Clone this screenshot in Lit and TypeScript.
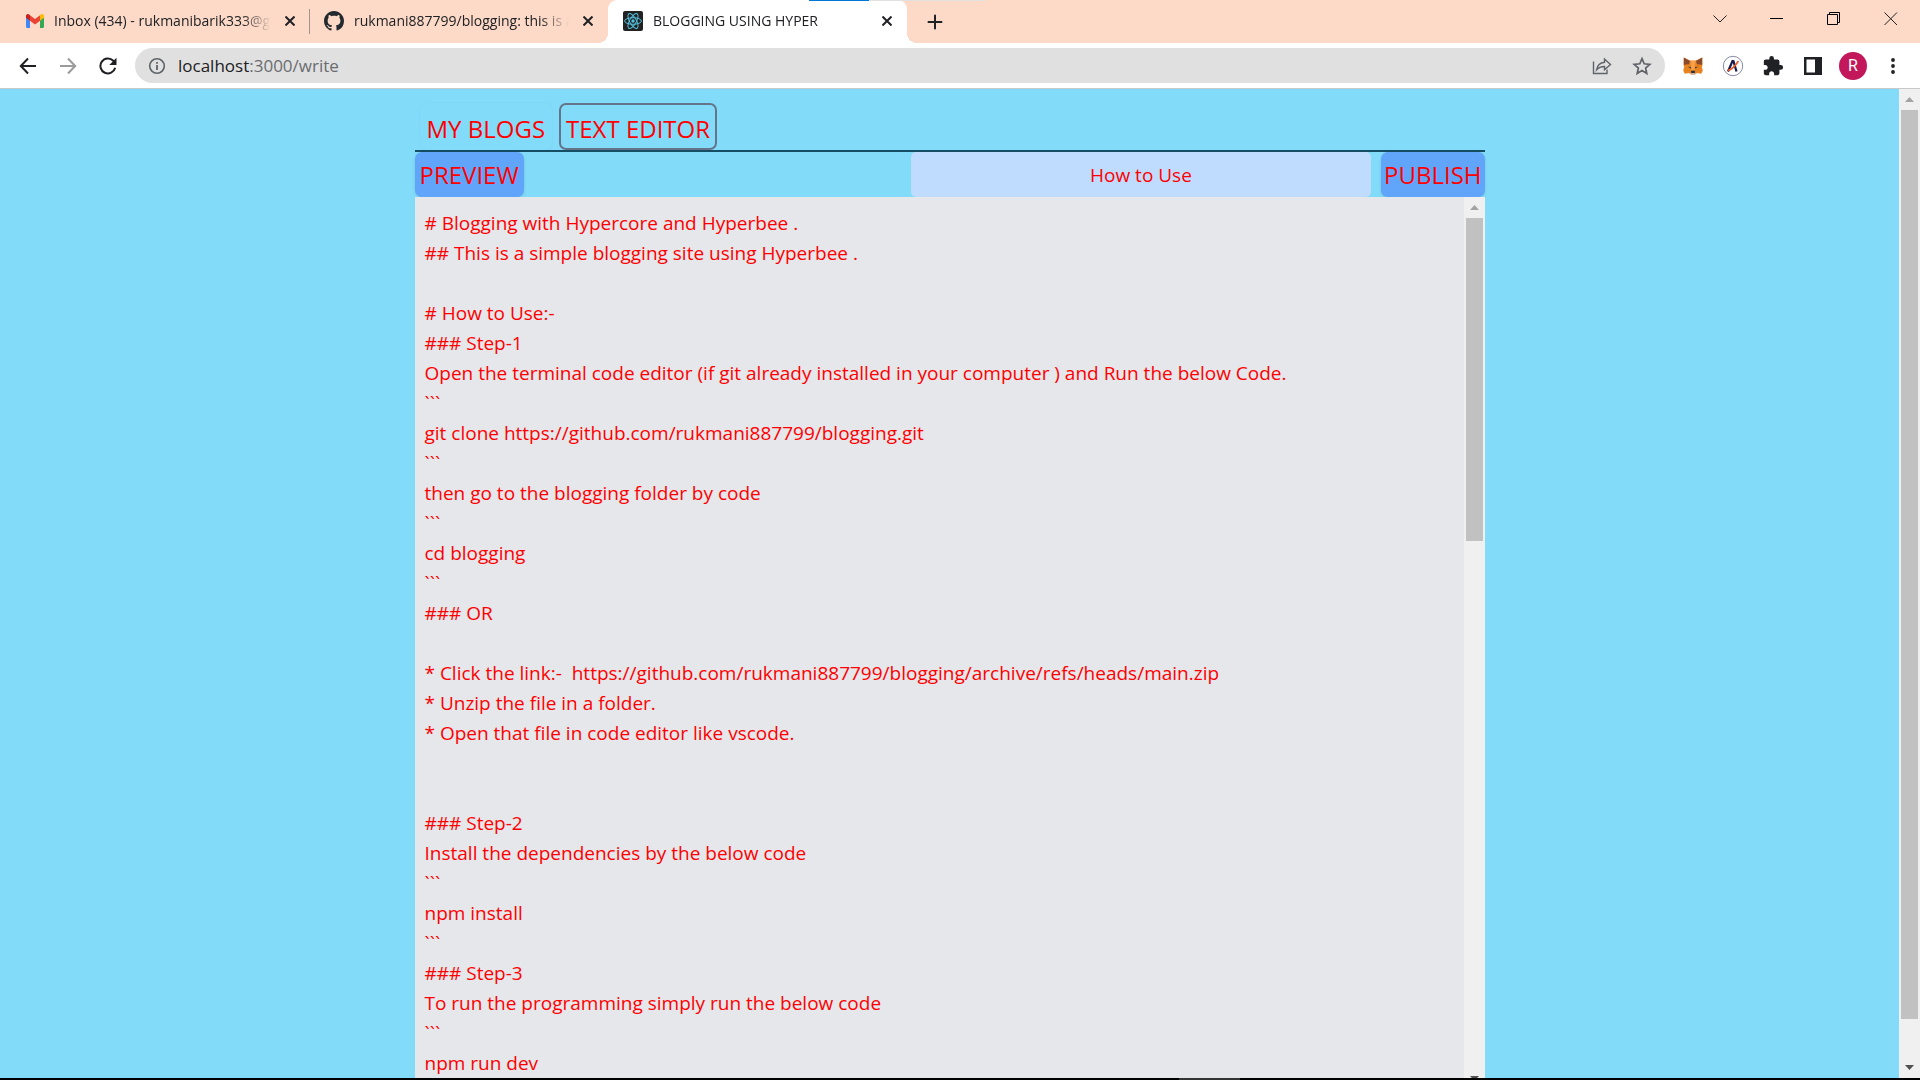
import { LitElement, html, css, svg } from "lit";
import { customElement, property, state } from "lit/decorators.js";

const DRAFT = `# Blogging with Hypercore and Hyperbee .
## This is a simple blogging site using Hyperbee .

# How to Use:-
### Step-1
Open the terminal code editor (if git already installed in your computer ) and Run the below Code.
\`\`\`
git clone https://github.com/rukmani887799/blogging.git
\`\`\`
then go to the blogging folder by code
\`\`\`
cd blogging
\`\`\`
### OR

* Click the link:-  https://github.com/rukmani887799/blogging/archive/refs/heads/main.zip
* Unzip the file in a folder.
* Open that file in code editor like vscode.


### Step-2
Install the dependencies by the below code
\`\`\`
npm install
\`\`\`
### Step-3
To run the programming simply run the below code
\`\`\`
npm run dev`;

const reset = css`
  :host,
  * {
    box-sizing: border-box;
  }
  button,
  input,
  textarea {
    font: inherit;
    color: inherit;
    background: none;
    border: 0;
    margin: 0;
    padding: 0;
    outline: 0;
  }
  a {
    color: inherit;
    text-decoration: none;
  }
  svg {
    display: block;
  }
`;

const gmailIcon = svg`<svg width="18" height="14" viewBox="0 0 18 14">
  <path fill="#4285f4" d="M0 2.2V12.8C0 13.5.5 14 1.2 14H4V5.6L0 2.6Z"/>
  <path fill="#34a853" d="M14 14h2.8c.7 0 1.2-.5 1.2-1.2V2.6l-4 3Z"/>
  <path fill="#fbbc04" d="M14 1.5v5.3l4-3V2C18 .3 16.2-.6 14.8.4L14 1Z"/>
  <path fill="#ea4335" d="M4 6.8V1.2l5 3.8 5-3.8v5.6L9 10.6Z"/>
  <path fill="#c5221f" d="M0 2v1.8l4 3V1.2L3.2.4C1.8-.6 0 .3 0 2Z"/>
</svg>`;

const githubIcon = svg`<svg width="20" height="20" viewBox="0 0 16 16" fill="#24292f">
  <path d="M8 0C3.58 0 0 3.58 0 8c0 3.54 2.29 6.53 5.47 7.59.4.07.55-.17.55-.38 0-.19-.01-.82-.01-1.49-2.01.37-2.53-.49-2.69-.94-.09-.23-.48-.94-.82-1.13-.28-.15-.68-.52-.01-.53.63-.01 1.08.58 1.23.82.72 1.21 1.87.87 2.33.66.07-.52.28-.87.51-1.07-1.78-.2-3.64-.89-3.64-3.95 0-.87.31-1.59.82-2.15-.08-.2-.36-1.02.08-2.12 0 0 .67-.21 2.2.82.64-.18 1.32-.27 2-.27s1.36.09 2 .27c1.53-1.04 2.2-.82 2.2-.82.44 1.1.16 1.92.08 2.12.51.56.82 1.27.82 2.15 0 3.07-1.87 3.75-3.65 3.95.29.25.54.73.54 1.48 0 1.07-.01 1.93-.01 2.2 0 .21.15.46.55.38A8.01 8.01 0 0 0 16 8c0-4.42-3.58-8-8-8Z"/>
</svg>`;

const reactIcon = svg`<svg width="20" height="20" viewBox="0 0 20 20">
  <rect width="20" height="20" rx="2" fill="#222"/>
  <g fill="none" stroke="#53c1de" stroke-width="1">
    <ellipse cx="10" cy="10" rx="8.4" ry="3.3"/>
    <ellipse cx="10" cy="10" rx="8.4" ry="3.3" transform="rotate(60 10 10)"/>
    <ellipse cx="10" cy="10" rx="8.4" ry="3.3" transform="rotate(120 10 10)"/>
  </g>
  <circle cx="10" cy="10" r="1.7" fill="#53c1de"/>
</svg>`;

const closeIcon = svg`<svg width="10" height="10" viewBox="0 0 10 10" stroke="#202124" stroke-width="2">
  <path d="M.5.5 9.5 9.5M9.5.5.5 9.5"/>
</svg>`;
const plusIcon = svg`<svg width="16" height="16" viewBox="0 0 16 16" stroke="#202124" stroke-width="2" stroke-linecap="round">
  <path d="M8 1.5v13M1.500 8h13"/>
</svg>`;

const chevronIcon = svg`<svg width="14" height="14" viewBox="0 0 14 14" fill="none" stroke="#222"><path d="M.5 3.5 7 10l6.500-6.500"/></svg>`;
const minimiseIcon = svg`<svg width="14" height="14" viewBox="0 0 14 14" fill="none" stroke="#000"><path d="M0 6.5h13"/></svg>`;
const restoreIcon = svg`<svg width="14" height="14" viewBox="0 0 14 14" fill="none" stroke="#000"><path d="M.5 2.5h10v10H.5ZM2.5 2.5v-2h10v10h-2"/></svg>`;
const quitIcon = svg`<svg width="14" height="14" viewBox="0 0 14 14" fill="none" stroke="#222"><path d="M.5.5l12.5 12.5M13 .5.5 13"/></svg>`;

const backIcon = svg`<svg width="18" height="18" viewBox="0 0 18 18" fill="none" stroke="#202124" stroke-width="2"><path d="M17 9H2M9 1.5 1.8 9 9 16.5"/></svg>`;
const forwardIcon = svg`<svg width="18" height="18" viewBox="0 0 18 18" fill="none" stroke="#9a9b9d" stroke-width="2"><path d="M1 9h15M9 1.5 16.2 9 9 16.5"/></svg>`;
const reloadIcon = svg`<svg width="18" height="18" viewBox="0 0 18 18"><path fill="none" stroke="#202124" stroke-width="2" d="M16.2 10.8A7.5 7.5 0 1 1 14.3 3.7L15.5 5"/><path fill="#202124" d="M17.5.8V8h-7.2Z"/></svg>`;
const infoIcon = svg`<svg width="18" height="18" viewBox="0 0 18 18"><circle cx="9" cy="9" r="7.3" fill="none" stroke="#5f6368" stroke-width="1.6"/><path fill="#5f6368" d="M8.1 8h1.8v5H8.1ZM8.1 5h1.8v1.8H8.1Z"/></svg>`;
const shareIcon = svg`<svg width="20" height="20" viewBox="0 0 20 20" fill="none" stroke="#5f6368" stroke-width="1.4"><path d="M1.5 5.5v12h13.500v-4"/><path d="M12.5 3v3.3C8 6.8 5.3 9.500 4.600 13.800c2-2.400 4.400-3.300 7.900-3.300v3.300L18.500 8.400Z"/></svg>`;
const starIcon = svg`<svg width="20" height="20" viewBox="0 0 20 20" fill="none" stroke="#5f6368" stroke-width="1.7"><path d="M10 2.6l2.2 5.2 5.6.5-4.2 3.7 1.2 5.5L10 14.6l-4.8 2.9L6.4 12 2.2 8.3l5.6-.5Z"/></svg>`;
const foxIcon = svg`<svg width="20" height="20" viewBox="0 0 20 20">
  <path fill="#e8821e" d="M.8 1.5 7 4.5h6l6.2-3 .4 7-.8 2.5 1 3.5-1.6 3.2-4.2-.7L12 18.5H8l-2-1.5-4.2.7L.2 14.5l1-3.5-.8-2.5Z"/>
  <path fill="#8a4a2c" d="M.8 1.5 7 5 6 8.2l-5 .6ZM19.2 1.5 13 5l1 3.2 5 .6Z"/>
  <path fill="#f6a04a" d="M7.5 5h5l-1 9h-3Z"/>
  <path fill="#233447" d="M4.8 10.8l3 .3.2 1.4ZM15.2 10.8l-3 .3-.2 1.4ZM8 15.5l.6-.8h2.8l.6.8-.3 1.8H8.3Z"/>
  <path fill="#d5bfb2" d="M7 17.2h6L12 19H8Z"/>
</svg>`;
const argentIcon = svg`<svg width="22" height="22" viewBox="0 0 22 22" fill="none"><circle cx="11" cy="11" r="9.7" fill="#fff" stroke="#8a8aa5" stroke-width="1"/><path stroke="#1b1b4b" stroke-width="2.2" d="M6 16.5 10.500 6l1 .2L14.500 16.500"/><path stroke="#ee5a2a" stroke-width="1.6" d="M5.500 15.500c4-.5 7-3.500 11-9.500"/></svg>`;
const puzzleIcon = svg`<svg width="22" height="22" viewBox="0 0 24 24" fill="#202124"><path d="M20.5 11H19V7c0-1.1-.9-2-2-2h-4V3.5a2.5 2.5 0 0 0-5 0V5H4c-1.1 0-1.99.9-1.99 2v3.8H3.5c1.49 0 2.7 1.21 2.7 2.7s-1.21 2.7-2.7 2.7H2V20c0 1.1.9 2 2 2h3.8v-1.5c0-1.49 1.21-2.7 2.7-2.7 1.49 0 2.7 1.21 2.7 2.7V22H17c1.1 0 2-.9 2-2v-4h1.5a2.5 2.5 0 0 0 0-5Z"/></svg>`;
const panelIcon = svg`<svg width="18" height="18" viewBox="0 0 18 18"><path fill="#202124" fill-rule="evenodd" d="M0 0h18v18H0ZM2.5 2.5v13h8.500v-13Z"/></svg>`;
const dotsIcon = svg`<svg width="18" height="18" viewBox="0 0 18 18" fill="#202124"><circle cx="9" cy="3" r="1.9"/><circle cx="9" cy="9" r="1.9"/><circle cx="9" cy="15" r="1.9"/></svg>`;

/** Tab strip along the top of the browser window. */
@customElement("tab-strip")
export class TabStrip extends LitElement {
  static styles = [
    reset,
    css`
      :host {
        display: flex;
        height: 43px;
        background: #fddac8;
        font-size: 14px;
        color: #202124;
        position: relative;
      }
      .tab {
        display: flex;
        align-items: center;
        width: 299px;
        height: 43px;
        padding: 0 12px 2px 15px;
      }
      .mail {
        width: 310px;
        padding-left: 26px;
      }
      .repo {
        width: 298px;
        padding-left: 14px;
      }
      .active {
        background: #fff;
        border-radius: 9px 9px 0 0;
        position: relative;
      }
      .active::before,
      .active::after {
        content: "";
        position: absolute;
        bottom: 0;
        width: 10px;
        height: 10px;
      }
      .active::before {
        left: -10px;
        background: radial-gradient(circle at 0 0, transparent 10px, #fff 10px);
      }
      .active::after {
        right: -10px;
        background: radial-gradient(circle at 100% 0, transparent 10px, #fff 10px);
      }
      .name {
        flex: 1;
        min-width: 0;
        display: flex;
        align-items: center;
        gap: 10px;
        white-space: nowrap;
        mask-image: linear-gradient(to left, transparent 3px, #000 32px);
      }
      .name svg {
        flex: none;
      }
      .close {
        flex: none;
        display: grid;
        place-items: center;
        width: 16px;
        height: 16px;
        margin-left: 8px;
      }
      .divider {
        width: 1px;
        height: 25px;
        margin: 9px 0 0 -1px;
        background: #a5928a;
      }
      .new {
        display: grid;
        place-items: center;
        width: 32px;
        margin-left: 12px;
      }
      .window {
        display: flex;
        margin: 0 1px 6px auto;
      }
      .window button {
        display: grid;
        place-items: center;
        width: 57px;
      }
      .edge {
        position: absolute;
        top: 0;
        left: 809px;
        width: 176px;
        height: 1px;
        background: linear-gradient(to right, #0078d7 60px, #e3e1e0 60px);
      }
    `,
  ];

  render() {
    return html`
      <div class="tab mail">
        <a class="name" href="#mail">${gmailIcon}<span>Inbox (434) - rukmanibarik333@g</span></a>
        <button class="close" aria-label="Close tab">${closeIcon}</button>
      </div>
      <div class="divider"></div>
      <div class="tab repo">
        <a class="name" href="#repo">${githubIcon}<span>rukmani887799/blogging: this is a</span></a>
        <button class="close" aria-label="Close tab">${closeIcon}</button>
      </div>
      <div class="tab active">
        <a class="name" href="#write">${reactIcon}<span>BLOGGING USING HYPER</span></a>
        <button class="close" aria-label="Close tab">${closeIcon}</button>
      </div>
      <button class="new" aria-label="New tab">${plusIcon}</button>
      <div class="window">
        <button aria-label="Search tabs">${chevronIcon}</button>
        <button aria-label="Minimise">${minimiseIcon}</button>
        <button aria-label="Restore">${restoreIcon}</button>
        <button aria-label="Close window">${quitIcon}</button>
      </div>
      <div class="edge"></div>
    `;
  }
}

/** Navigation buttons, address field and extensions. */
@customElement("address-bar")
export class AddressBar extends LitElement {
  static styles = [
    reset,
    css`
      :host {
        display: flex;
        align-items: center;
        height: 46px;
        padding: 0 7px 0 8px;
        background: #fff;
        border-bottom: 1px solid #c8c8c8;
      }
      .tool {
        flex: none;
        display: grid;
        place-items: center;
        width: 40px;
        height: 35px;
      }
      .field {
        flex: 1;
        display: flex;
        align-items: center;
        height: 35px;
        margin: 0 8px 0 7px;
        padding: 0 3px 0 13px;
        border-radius: 18px;
        background: #e0e0e0;
        font-size: 17px;
        color: #6a6c70;
      }
      .info {
        margin-right: 12px;
      }
      .url {
        flex: 1;
      }
      .host {
        color: #202124;
      }
      .avatar {
        display: grid;
        place-items: center;
        width: 28px;
        height: 28px;
        border-radius: 50%;
        background: #c2185b;
        color: #fff;
        font-family: Roboto, sans-serif;
        font-size: 16px;
      }
    `,
  ];

  render() {
    return html`
      <button class="tool" aria-label="Back">${backIcon}</button>
      <button class="tool" aria-label="Forward">${forwardIcon}</button>
      <button class="tool" aria-label="Reload">${reloadIcon}</button>
      <div class="field">
        <button class="info" aria-label="Site information">${infoIcon}</button>
        <a class="url" href="#write"><span class="host">localhost</span>:3000/write</a>
        <button class="tool" aria-label="Share">${shareIcon}</button>
        <button class="tool" aria-label="Bookmark">${starIcon}</button>
      </div>
      <button class="tool" aria-label="Wallet">${foxIcon}</button>
      <button class="tool" aria-label="Signer">${argentIcon}</button>
      <button class="tool" aria-label="Extensions">${puzzleIcon}</button>
      <button class="tool" aria-label="Side panel">${panelIcon}</button>
      <button class="tool" aria-label="Profile"><span class="avatar">R</span></button>
      <button class="tool" aria-label="Menu">${dotsIcon}</button>
    `;
  }
}

/** Vertical scrollbar; the thumb takes a share of the track. */
@customElement("scroll-track")
export class ScrollTrack extends LitElement {
  @property({ type: Number }) thumb = 50;

  static styles = css`
    :host {
      flex: none;
      display: flex;
      flex-direction: column;
      width: 21px;
      background: #f0f0f0;
    }
    .arrow {
      flex: none;
      display: grid;
      place-items: center;
      height: 21px;
    }
    .lane {
      flex: 1;
      padding: 0 2px;
    }
    .thumb {
      background: #c1c1c1;
    }
    svg {
      display: block;
    }
  `;

  render() {
    return html`
      <div class="arrow"><svg width="9" height="5" viewBox="0 0 9 5"><path fill="#a3a3a3" d="M0 5h9L4.5 0Z" /></svg></div>
      <div class="lane"><div class="thumb" style="height:${this.thumb}%"></div></div>
      <div class="arrow"><svg width="9" height="5" viewBox="0 0 9 5"><path fill="#505050" d="M0 0h9L4.5 5Z" /></svg></div>
    `;
  }
}

/** The blog writing page. */
@customElement("blog-editor")
export class BlogEditor extends LitElement {
  @state() private text = DRAFT;

  static styles = [
    reset,
    css`
      :host {
        flex: 1;
        min-width: 0;
        display: flex;
        justify-content: center;
        overflow: hidden;
        background: #82dbf9;
        color: #f00;
      }
      main {
        flex: 1;
        max-width: 1070px;
        display: flex;
        flex-direction: column;
      }
      nav {
        display: flex;
        gap: 7px;
        padding: 14px 5px 0;
        border-bottom: 2px solid #164e63;
        font-size: 24px;
        line-height: 36px;
      }
      nav a {
        padding: 6px 5px 1px;
        border: 2px solid transparent;
        border-radius: 7px;
      }
      nav .idle {
        box-shadow: 0 0 2px rgba(0, 80, 120, 0.07);
      }
      nav .current {
        border-color: #64748b;
      }
      .bar {
        display: flex;
        gap: 10px;
        height: 45px;
      }
      .bar button {
        padding: 0 5px;
        border-radius: 7px;
        background: #60a5fa;
        box-shadow: 0 1px 3px rgba(0, 0, 0, 0.12);
        font-size: 24px;
      }
      .bar .publish {
        padding: 0 3px;
      }
      .title {
        width: 43%;
        margin-left: auto;
        border-radius: 5px;
        background: #bfdbfe;
        font-size: 19px;
        text-align: center;
      }
      .sheet {
        flex: 1;
        display: flex;
        min-height: 0;
        margin-bottom: -11px;
        position: relative;
        background: #e5e7eb;
      }
      textarea {
        flex: 1;
        padding: 11px 10px 0;
        resize: none;
        overflow: hidden;
        font-size: 19px;
        line-height: 30px;
      }
    `,
  ];

  render() {
    return html`
      <main>
        <nav>
          <a class="idle" href="#blogs">MY BLOGS</a>
          <a class="current" href="#write">TEXT EDITOR</a>
        </nav>
        <div class="bar">
          <button>PREVIEW</button>
          <input class="title" aria-label="Blog title" .value=${"How to Use"} />
          <button class="publish">PUBLISH</button>
        </div>
        <div class="sheet">
          <textarea
            aria-label="Blog text"
            spellcheck="false"
            .value=${this.text}
            @input=${(e: Event) => (this.text = (e.target as HTMLTextAreaElement).value)}
          ></textarea>
          <scroll-track thumb="38"></scroll-track>
        </div>
      </main>
    `;
  }
}

@customElement("app-root")
export class AppRoot extends LitElement {
  static styles = css`
    :host {
      display: flex;
      flex-direction: column;
      height: 100vh;
      overflow: hidden;
      font-family: "Open Sans", "Noto Sans", sans-serif;
    }
    .page {
      flex: 1;
      min-height: 0;
      display: flex;
    }
    .taskbar {
      flex: none;
      display: flex;
      justify-content: center;
      height: 2px;
      background: #000;
    }
    .running {
      width: 61px;
      margin-left: 499px;
      background: #333;
    }
  `;

  render() {
    return html`
      <tab-strip></tab-strip>
      <address-bar></address-bar>
      <div class="page">
        <blog-editor></blog-editor>
        <scroll-track thumb="96"></scroll-track>
      </div>
      <div class="taskbar"><div class="running"></div></div>
    `;
  }
}
